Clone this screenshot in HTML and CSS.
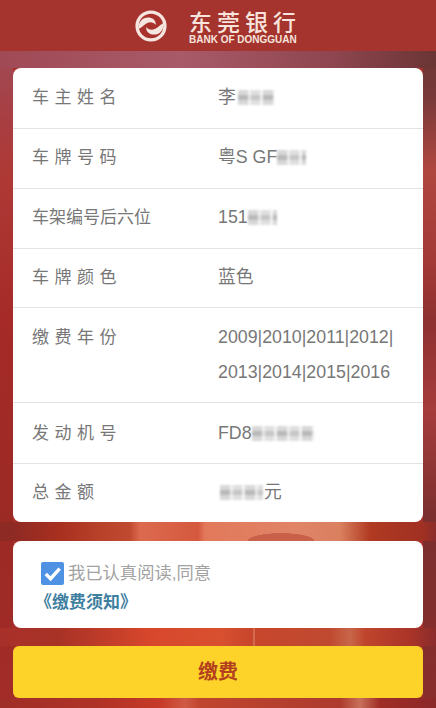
FILE: index.html
```html
<!DOCTYPE html>
<html lang="zh">
<head>
<meta charset="utf-8">
<title>东莞银行</title>
<link rel="stylesheet" href="styles.css">
</head>
<body>
<header class="topbar">
  <svg class="logo" viewBox="0 0 36 36" aria-hidden="true">
    <circle cx="18" cy="18" r="16.500" fill="#f6e6e0"/>
    <circle cx="18" cy="18" r="13" fill="#a9332c"/>
    <path d="M5 21C4 13 10 8 16.500 9c4.500.8 7 4 6.500 8-2-3-6-3.800-9.500-2-3.500 1.800-5 4.500-8.500 6z" fill="#f6e6e0"/>
    <path d="M31 15c1 8-5 13-11.500 12-4.500-.8-7-4-6.500-8 2 3 6 3.800 9.500 2 3.500-1.800 5-4.500 8.500-6z" fill="#f6e6e0"/>
  </svg>
  <div class="brand">
    <div class="brand-cn">东莞银行</div>
    <div class="brand-en">BANK OF DONGGUAN</div>
  </div>
</header>
<main class="content">
  <section class="card info">
    <div class="row"><div class="label spaced">车主姓名</div><div class="value">李<span class="mask w-name"></span></div></div>
    <div class="row"><div class="label spaced">车牌号码</div><div class="value">粤S GF<span class="mask w-plate"></span></div></div>
    <div class="row"><div class="label">车架编号后六位</div><div class="value">151<span class="mask w-plate"></span></div></div>
    <div class="row"><div class="label spaced">车牌颜色</div><div class="value">蓝色</div></div>
    <div class="row tall"><div class="label spaced">缴费年份</div><div class="value">2009|2010|2011|2012|<wbr>2013|2014|2015|2016</div></div>
    <div class="row"><div class="label spaced">发动机号</div><div class="value">FD8<span class="mask w-engine"></span></div></div>
    <div class="row"><div class="label spaced">总金额</div><div class="value"><span class="mask w-sum"></span>元</div></div>
  </section>
  <section class="card agree">
    <div class="check-line">
      <svg class="check" viewBox="0 0 24 24" aria-hidden="true">
        <rect width="24" height="24" rx="2" fill="#4f92e3"/>
        <path d="M5 12.500l5 5L19.500 7" fill="none" stroke="#fff" stroke-width="3.600"/>
      </svg>
      <span>我已认真阅读,同意</span>
    </div>
    <a class="notice">《缴费须知》</a>
  </section>
  <button class="pay" type="button">缴费</button>
</main>
</body>
</html>
```
FILE: styles.css
```css
* { box-sizing: border-box; }
html, body { margin: 0; height: 708px; overflow: hidden; }
body {
  width: 436px;
  font-family: "Liberation Sans", "Noto Sans CJK SC", sans-serif;
  background-color: #a9302a;
  background-repeat: no-repeat;
  background-image:
    radial-gradient(ellipse 34px 8px at 281px 19px, #c8604a 96%, rgba(200,96,74,0) 100%),
    linear-gradient(90deg, #8e2a24 13px, #a8301f 60px, #b8412a 100px, #c04a30 130px, #dc6a4e 140px, #d4583e 198px, #e2795a 205px, #e08468 300px, #d9805f 340px, #b03a22 370px, #a03022 423px, #8a2c2c 436px),
    linear-gradient(90deg, rgba(255,225,200,0) 253px, rgba(255,225,200,.45) 254px, rgba(255,225,200,0) 255px),
    linear-gradient(90deg, #a8302a 0, #a93226 60px, #c8402a 120px, #d8472c 150px, #d85030 220px, #c8462c 250px, #bf4a30 330px, #c8664a 350px, #c0452c 365px, #aa3428 410px, #8a2c2c 436px),
    linear-gradient(90deg, #9f2e28 0, #b03226 100px, #c63a28 160px, #d05a44 185px, #c0452e 200px, #ad3a2d 340px, #c8705a 360px, #a02c26 380px, #8a2828 436px),
    linear-gradient(90deg, #a04a55 0, #a85a68 180px, #8f4650 330px, #6b3535 436px),
    linear-gradient(180deg, #a04a55 51px, #a83e42 120px, #ae3a36 170px, #a52a28 320px, #9c2a24 520px, #a32c28 708px),
    linear-gradient(180deg, #6b3535 51px, #7a3a3a 100px, #b0473f 170px, #a33a36 260px, #8e3030 320px, #a63c3c 410px, #7a2e2e 520px, #8a2c2c 708px);
  background-position:
    0 522px,
    0 522px,
    0 628px,
    0 628px,
    0 698px,
    0 51px,
    0 0,
    423px 0;
  background-size:
    436px 19px,
    436px 19px,
    436px 18px,
    436px 18px,
    436px 10px,
    436px 17px,
    13px 708px,
    13px 708px;
}
.topbar {
  height: 51px;
  display: flex;
  align-items: center;
  justify-content: center;
  gap: 21px;
  padding-right: 6px;
  background: #a5342e;
}
.logo { width: 34px; height: 34px; flex: none; }
.brand { width: 107px; color: #f7e4dc; text-align: center; padding-top: 1px; }
.brand-cn { font-size: 23px; line-height: 26px; letter-spacing: 5px; margin-right: -5px; font-weight: 500; white-space: nowrap; font-family: "Noto Sans CJK SC", sans-serif; }
.brand-en { margin-top: 1px; font-size: 10px; line-height: 10px; font-weight: 700; letter-spacing: 0; white-space: nowrap; }
.content { padding: 17px 13px 0; display: flex; flex-direction: column; }
.card { background: #fff; border-radius: 8px; }
.info { height: 454px; padding-top: 1px; }
.row {
  height: 60px;
  padding: 0 19px 2px;
  display: flex;
  align-items: center;
  border-bottom: 1px solid #e3e3e3;
  font-size: 17px;
  color: #777;
}
.row:nth-child(4) { height: 59px; }
.row:nth-child(6) { height: 61px; padding-bottom: 0; }
.row:last-child { border-bottom: 0; padding-bottom: 4px; }
.row.tall { height: 95px; align-items: flex-start; padding-top: 12px; }
.label { width: 186px; flex: none; line-height: 35px; white-space: nowrap; }
.label.spaced { letter-spacing: 5.500px; }
.value { flex: 1; line-height: 35px; font-size: 17.800px; }
.mask {
  display: inline-block;
  height: 15px;
  vertical-align: -2px;
  background:
    linear-gradient(180deg, rgba(255,255,255,.45) 0 5px, rgba(255,255,255,0) 5px 10px, rgba(255,255,255,.45) 10px),
    repeating-linear-gradient(90deg, #b9b9b9 0 10px, #e6e6e6 10px 13px, #c6c6c6 13px 22px, #eeeeee 22px 25px);
  filter: blur(1px);
}
.w-name { width: 36px; margin-left: 2px; }
.w-plate { width: 29px; }
.w-engine { width: 62px; }
.w-sum { width: 43px; margin: 0 1px 0 2px; }
.agree { margin-top: 19px; height: 87px; padding: 20px 0 0 28px; }
.check-line { display: flex; align-items: center; gap: 4px; font-size: 17.300px; line-height: 24px; color: #a2a2a2; }
.check { width: 23px; height: 23px; flex: none; }
.notice { display: block; margin: 6px 0 0 -6px; font-size: 17px; line-height: 24px; font-weight: 700; color: #3f7f9f; white-space: nowrap; }
.pay {
  margin-top: 18px;
  height: 52px;
  border: 0;
  border-radius: 6px;
  padding: 0 0 4px;
  background: #fdd329;
  color: #b3401e;
  font: 700 20px "Noto Sans CJK SC", sans-serif;
}
```
